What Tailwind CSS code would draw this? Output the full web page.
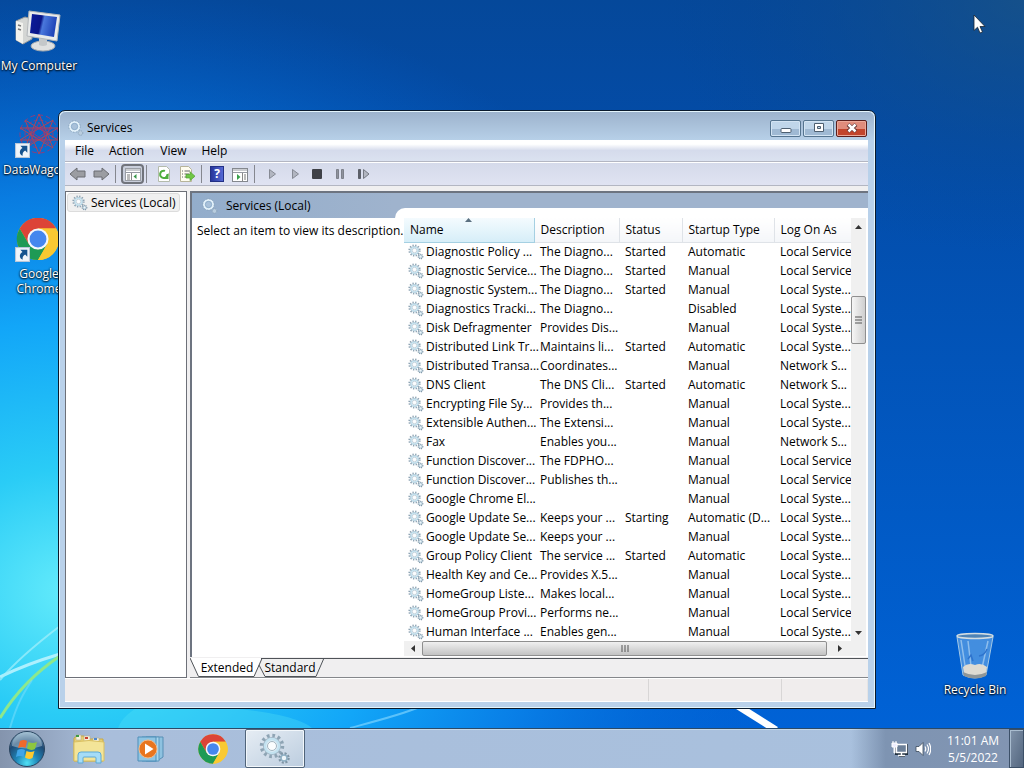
<!DOCTYPE html>
<html lang="en">
<head>
<meta charset="utf-8">
<title>Services</title>
<script src="https://cdn.jsdelivr.net/npm/@tailwindcss/browser@4"></script>
</head>
<body class="h-screen overflow-hidden flex flex-col font-['Open_Sans','Noto_Sans',sans-serif] text-[12px] leading-4 text-black">

<!-- Shared icons -->
<svg class="hidden" aria-hidden="true">
  <defs>
    <symbol id="gears" viewBox="0 0 32 32">
      <circle cx="13" cy="13" r="8" fill="#e4eff6" stroke="#9db3c2" stroke-width="2"/>
      <circle cx="13" cy="13" r="10.500" fill="none" stroke="#8ea4b4" stroke-width="3.500" stroke-dasharray="2.700 2.800"/>
      <circle cx="13" cy="13" r="7" fill="none" stroke="#c3e2f0" stroke-width="2.500"/>
      <circle cx="13" cy="13" r="4.500" fill="#fbfdfe" stroke="#a3b5c0"/>
      <circle cx="25" cy="25" r="4.500" fill="none" stroke="#7f95a5" stroke-width="2.500" stroke-dasharray="2 1.530"/>
      <circle cx="25" cy="25" r="3" fill="#eef6fa" stroke="#8fb0c4" stroke-width="1.500"/>
    </symbol>
    <symbol id="ring" viewBox="0 0 16 16">
      <circle cx="6.500" cy="6.500" r="4.500" fill="#a9c1da" stroke="#e3f1fa" stroke-width="2.200"/>
      <circle cx="6.500" cy="6.500" r="5.800" fill="none" stroke="#8ba6be" stroke-width="1" stroke-dasharray="1.500 1.500"/>
      <circle cx="6.500" cy="6.500" r="3.200" fill="none" stroke="#86a8c6" stroke-width=".8"/>
      <circle cx="12.500" cy="13" r="2.300" fill="#b9cddf" stroke="#8ba3b8" stroke-dasharray="1.200 .8"/>
    </symbol>
    <symbol id="chrome" viewBox="0 0 48 48">
      <circle cx="24" cy="24" r="22" fill="#f9c932"/>
      <path d="M24 13H43.100A22 22 0 0 0 4.900 13L14.500 29.500Z" fill="#dc4437"/>
      <path d="M4.900 13A22 22 0 0 0 24 46L33.500 29.500 24 35 14.500 29.500Z" fill="#1e9a55"/>
      <path d="M24 46A22 22 0 0 0 43.100 13H24L33.500 29.500Z" fill="#f9c932"/>
      <circle cx="24" cy="24" r="11" fill="#f4f8fc"/>
      <circle cx="24" cy="24" r="8.800" fill="#4587ee"/>
    </symbol>
    <symbol id="shortcut" viewBox="0 0 14 14">
      <rect x=".5" y=".5" width="13" height="13" fill="#f0f5fa" stroke="#b8c7d8"/>
      <path d="M5 2.500h6.500V9L9.500 7C7.500 8.300 6.800 9.500 7.200 12 3.500 10.500 3.800 6.500 7 4.600Z" fill="#15538f"/>
    </symbol>
  </defs>
</svg>

<main class="relative flex-1 min-h-0 overflow-hidden bg-[#0058c4]">
  <!-- Wallpaper -->
  <svg class="absolute inset-0 w-full h-full" viewBox="0 0 1024 728" preserveAspectRatio="none" aria-hidden="true">
    <defs>
      <linearGradient id="sky" x1="0" y1="0" x2="0" y2="1">
        <stop offset="0" stop-color="#05489a"/><stop offset=".2" stop-color="#034ca8"/><stop offset="1" stop-color="#0062d6"/>
      </linearGradient>
      <radialGradient id="glow" gradientUnits="userSpaceOnUse" cx="70" cy="590" r="720" gradientTransform="translate(0 90) scale(1 .85)">
        <stop offset="0" stop-color="#64ebfb"/><stop offset=".2" stop-color="#2accf6"/><stop offset=".44" stop-color="#12a6f8"/><stop offset=".65" stop-color="#0a84ea" stop-opacity=".85"/><stop offset="1" stop-color="#0060d0" stop-opacity="0"/>
      </radialGradient>
      <radialGradient id="shade" cx="1" cy="0" r=".35">
        <stop offset="0" stop-color="#1c5484" stop-opacity=".7"/><stop offset="1" stop-color="#084690" stop-opacity="0"/>
      </radialGradient>
    </defs>
    <rect width="1024" height="728" fill="url(#sky)"/>
    <rect width="1024" height="728" fill="url(#glow)"/>
    <rect width="1024" height="728" fill="url(#shade)"/>
    <path d="M0 677C18 668 40 660 60 654" fill="none" stroke="#c8f6ff" stroke-width="3" opacity=".8"/>
    <path d="M0 680C15 662 35 645 60 626" fill="none" stroke="#a5f0fb" stroke-width="2" opacity=".7"/>
    <path d="M0 718C16 692 36 672 60 656" fill="none" stroke="#8de88c" stroke-width="3"/>
    <path d="M10 728C18 700 26 690 32 680" fill="none" stroke="#7de0fb" stroke-width="2" opacity=".5"/>
    <path d="M118 728C122 718 128 714 136 708H230C270 712 300 718 312 728Z" fill="#5be6f5" opacity=".3"/>
    <path d="M350 728C380 720 400 715 420 707" fill="none" stroke="#8edcff" stroke-width="2" opacity=".6"/>
    <path d="M738 706 776 730" stroke="#ffffff" stroke-width="7"/>
  </svg>

  <!-- Desktop shortcuts -->
  <a href="#computer" class="absolute left-0 top-[10px] w-[78px] flex flex-col items-center text-white [text-shadow:0_1px_2px_#000,0_0_2px_#000]">
    <svg class="w-12 h-12" viewBox="0 0 48 48" aria-hidden="true">
      <defs><linearGradient id="scr" x1="0" y1="0" x2="1" y2=".2"><stop offset="0" stop-color="#0a1c9c"/><stop offset=".45" stop-color="#0a1688"/><stop offset=".55" stop-color="#4a78dc"/><stop offset="1" stop-color="#1f44b8"/></linearGradient></defs>
      <path d="M1 11 10 7 17 9V29L8 34 1 30Z" fill="#d4d6d4" stroke="#94989a"/>
      <path d="M1 11 8 13V34L1 30Z" fill="#f2f2ee"/><path d="M3 15l3 1M3 19l3 1" stroke="#777" stroke-width="1.500"/>
      <ellipse cx="28" cy="36" rx="12" ry="5" fill="#dfe1e1" stroke="#a9acae"/>
      <path d="M24 27h8v8q-4 2-8 0Z" fill="#c4c8ca"/>
      <path d="M14 1 45 5 42 31 12 26Z" fill="#e9ebeb" stroke="#b3b7ba"/>
      <path d="M17 4 42 7 39 27 15 23Z" fill="url(#scr)"/>
    </svg>
    <span class="whitespace-nowrap">My Computer</span>
  </a>
  <a href="#datawagon" class="absolute left-0 top-[114px] w-[78px] flex flex-col items-center text-white [text-shadow:0_1px_2px_#000,0_0_2px_#000]">
    <svg class="w-12 h-12" viewBox="0 0 48 48" aria-hidden="true">
      <g fill="none" stroke="#8f3d7c" stroke-width="1">
        <circle cx="24" cy="20" r="19" stroke-dasharray="5 3"/><circle cx="24" cy="20" r="14" stroke-dasharray="4 2"/><circle cx="24" cy="20" r="6"/>
        <path d="M24 0 38 34 5 14H43L10 34Z M24 40 10 6 43 26H5L38 6Z" stroke="#b24358"/>
        <path d="M24 8 34 30 12 15H36L14 30Z"/>
      </g>
      <use href="#shortcut" x="0" y="29" width="15" height="15"/>
    </svg>
    <span class="self-start ml-[3px] whitespace-nowrap">DataWagon</span>
  </a>
  <a href="#chrome-app" class="absolute left-0 top-[218px] w-[78px] flex flex-col items-center text-center text-white leading-[15px] [text-shadow:0_1px_2px_#000,0_0_2px_#000]">
    <svg class="w-12 h-12" viewBox="0 0 48 48" aria-hidden="true">
      <use href="#chrome" x="0" y="-2" width="46" height="46"/>
      <use href="#shortcut" x="0" y="29" width="15" height="15"/>
    </svg>
    <span>Google<br>Chrome</span>
  </a>
  <a href="#recycle" class="absolute right-[10px] bottom-[30px] w-[78px] flex flex-col items-center text-white [text-shadow:0_1px_2px_#000,0_0_2px_#000]">
    <svg class="w-12 h-[50px]" viewBox="0 0 48 50" aria-hidden="true">
      <path d="M6 5 12 43Q24 49 35 43L42 5Z" fill="#6faeea" fill-opacity=".6" stroke="#a4c9e6"/>
      <path d="M10 8 15 40M17 9 20 34M37 9 31 36" stroke="#d9eefa" stroke-width="1.500" opacity=".5"/>
      <path d="M12 35Q17 30 24 33Q30 30 36 35L35 42Q24 48 13 42Z" fill="#dedbd2"/>
      <path d="M12 40Q24 46 36 40L35 44Q24 49 13 44Z" fill="#8f9698"/>
      <path d="M17 27 20 23 22 29M36 17Q34 23 28 24" fill="none" stroke="#2f74cd" stroke-width="1.500"/>
      <ellipse cx="24" cy="4" rx="18" ry="2.500" fill="#4e83b6" stroke="#d3dde2" stroke-width="1.500"/>
    </svg>
    <span class="whitespace-nowrap">Recycle Bin</span>
  </a>

  <!-- Services window -->
  <section class="absolute left-[58px] right-[148px] top-[110px] rounded-t-[7px] border border-[#0a1a2c] bg-[#b9d1ea] shadow-[inset_0_0_0_1px_#e4f5fc] pl-[6px] pr-[7px] pb-[6px]">
    <header class="-ml-[5px] -mr-[6px] mt-px px-[7px] h-7 flex items-center rounded-t-[6px] bg-gradient-to-b from-[#9db3cd] to-[#b7d0e8]">
      <svg class="w-4 h-4 ml-px mt-1" aria-hidden="true"><use href="#ring"/></svg>
      <h1 class="ml-[3px] pt-1 flex-1">Services</h1>
      <div class="flex gap-[2px] pt-1">
        <button aria-label="Minimize" class="w-[31px] h-[17px] flex items-center justify-center rounded-[2px] border border-[#55748f] shadow-[inset_0_0_0_1px_#d3e4f3] bg-gradient-to-b from-[#c0d6ea] from-50% to-[#9fb9d3] to-50%">
          <svg class="w-3 h-3" viewBox="0 0 12 12"><rect x="1" y="6.500" width="10" height="4" rx="1" fill="#fff" stroke="#4d5f70"/></svg>
        </button>
        <button aria-label="Restore" class="w-[31px] h-[17px] flex items-center justify-center rounded-[2px] border border-[#55748f] shadow-[inset_0_0_0_1px_#d3e4f3] bg-gradient-to-b from-[#c0d6ea] from-50% to-[#9fb9d3] to-50%">
          <svg class="w-3 h-3" viewBox="0 0 12 12"><path d="M1.500 1.500h9v8h-9ZM4.500 4.500v2h3v-2Z" fill="#fff" fill-rule="evenodd" stroke="#4d5f70"/></svg>
        </button>
        <button aria-label="Close" class="w-[31px] h-[17px] flex items-center justify-center rounded-[2px] border border-[#5c1f1d] shadow-[inset_0_0_0_1px_#eba999] bg-gradient-to-b from-[#e08c7c] from-50% to-[#c2452c] to-50%">
          <svg class="w-3 h-3" viewBox="0 0 12 12"><path d="m2 2.500 8 7M10 2.500l-8 7" stroke="#5a3030" stroke-width="4"/><path d="m2.500 2.500 7 7M9.500 2.500l-7 7" stroke="#fff" stroke-width="2.500"/></svg>
        </button>
      </div>
    </header>

    <div class="bg-[#f0eff0]">
      <nav class="h-[22px] flex items-center bg-gradient-to-b from-white from-20% via-[#d5dbec] via-50% to-[#dbe2f0] border-b border-[#b3b6c2]">
        <button class="ml-[10px]">File</button>
        <button class="ml-[15px]">Action</button>
        <button class="ml-4">View</button>
        <button class="ml-[15px]">Help</button>
      </nav>

      <div class="h-6 flex items-center pl-1 bg-gradient-to-b from-[#d5daea] to-[#e0e3f2] border-t border-t-white border-b border-b-[#b3b6c2]" role="toolbar" aria-label="Tools">
        <button aria-label="Back"><svg class="w-[18px] h-4 block" viewBox="0 0 18 16"><path d="M1 8 8 2v3h8v6H8v3Z" fill="#9b9da2" stroke="#6b6d72"/></svg></button>
        <button aria-label="Forward" class="ml-[5px]"><svg class="w-[18px] h-4 block" viewBox="0 0 18 16"><path d="M17 8 10 2v3H2v6h8v3Z" fill="#9b9da2" stroke="#6b6d72"/></svg></button>
        <span class="ml-[5px] w-px h-[18px] bg-[#85878f]"></span>
        <button aria-label="Show or hide console tree" class="ml-[5px] w-[23px] h-5 rounded-[4px] border-2 border-[#71747c] bg-[#c9cedb] flex items-center justify-center">
          <svg class="w-4 h-[14px] shrink-0" viewBox="0 0 16 14"><rect x=".5" y="1.500" width="15" height="12" fill="#fff" stroke="#9b9fa6"/><path d="M1 3h14M1 5.500h14" stroke="#969aa3" stroke-width="1"/><path d="M6.500 6v7" stroke="#888"/><path d="M2 8h3M2 10h3M2 12h3" stroke="#777"/><path d="m11.500 7-3 2.500 3 2.500Z" fill="#38964a"/></svg>
        </button>
        <span class="ml-[2px] w-px h-[18px] bg-[#85878f]"></span>
        <button aria-label="Refresh" class="ml-[9px]"><svg class="w-4 h-4 block" viewBox="0 0 16 16"><path d="M2.500.5h8l3 3v12h-11Z" fill="#fff" stroke="#b4bbac"/><path d="M11.500 8A3.700 3.700 0 1 1 9 4.900" fill="none" stroke="#4fae3e" stroke-width="2"/><path d="M12.500 7v6H7.500Z" fill="#4fae3e"/></svg></button>
        <button aria-label="Export list" class="ml-[7px]"><svg class="w-4 h-4 block" viewBox="0 0 16 16"><path d="M1.500.5h8l3 3v12h-11Z" fill="#fffdf0" stroke="#b7b49a"/><path d="M3 5h1M5.500 5H11M3 8h1M5.500 8H10M3 11h1M5.500 11H9" stroke="#666"/><path d="M7 8.500h4V5.800l5 4.400-5 4.400V12H7Z" fill="#6fc645" stroke="#4fa12f" stroke-width=".7"/></svg></button>
        <span class="ml-[6px] w-px h-[18px] bg-[#85878f]"></span>
        <button aria-label="Help" class="ml-2 w-[14px] h-4 bg-gradient-to-r from-[#28369c] to-[#5468d4] border border-[#223086] text-white font-bold leading-[14px]">?</button>
        <button aria-label="Show action pane" class="ml-2"><svg class="w-4 h-4 block" viewBox="0 0 16 16"><rect x=".5" y="2.500" width="15" height="13" fill="#fff" stroke="#84888e"/><path d="M1 4h14M1 6.500h14" stroke="#969aa3"/><path d="M10.500 7v8" stroke="#888"/><path d="M12 9h2M12 11h2M12 13h2" stroke="#777"/><path d="m5 8 3.500 3L5 14Z" fill="#38a04a"/></svg></button>
        <span class="ml-[6px] w-px h-[18px] bg-[#85878f]"></span>
        <button aria-label="Start service" class="ml-[13px]"><svg class="w-[9px] h-3 block" viewBox="0 0 9 12"><path d="M1.500 1.500 7.500 6l-6 4.500Z" fill="#b2b6c1" stroke="#868a94"/></svg></button>
        <button aria-label="Resume service" class="ml-[14px]"><svg class="w-[9px] h-3 block" viewBox="0 0 9 12"><path d="M1.500 1.500 7.500 6l-6 4.500Z" fill="#b2b6c1" stroke="#868a94"/></svg></button>
        <button aria-label="Stop service" class="ml-3 w-[10px] h-[10px] rounded-[1px] bg-[#3f4147]"></button>
        <button aria-label="Pause service" class="ml-[14px]"><svg class="w-2 h-3 block" viewBox="0 0 8 12"><path d="M.5 1.500h2v9h-2ZM5.500 1.500h2v9h-2Z" fill="#8e929c" stroke="#7d818b"/></svg></button>
        <button aria-label="Restart service" class="ml-[14px]"><svg class="w-3 h-3 block" viewBox="0 0 12 12"><path d="M.5 1.500h2v9h-2Z" fill="#5c6069" stroke="#5c6069"/><path d="M5.500 1.500 11 6l-5.500 4.500Z" fill="#b2b6c1" stroke="#747882"/></svg></button>
      </div>

      <div class="flex gap-[3px] pt-[5px]">
        <!-- Console tree -->
        <aside class="w-[122px] shrink-0 bg-white border border-[#6d7078]">
          <a href="#local" class="m-px mr-[6px] h-[19px] flex items-center gap-[3px] pl-1 rounded-[3px] bg-[#f0f0f0] border border-[#dcdcdc] whitespace-nowrap">
            <svg class="w-4 h-4" aria-hidden="true"><use href="#gears"/></svg>Services (Local)
          </a>
        </aside>

        <div class="flex-1 min-w-0 flex flex-col">
          <!-- Result pane -->
          <div class="flex border-l-2 border-t-2 border-[#6d7480] bg-[#9fb3cd]">
            <div class="w-[203px] shrink-0 flex flex-col bg-white">
              <h2 class="h-[25px] flex items-center bg-gradient-to-r from-[#93adcb] to-[#9fb3cd] pl-[10px] gap-2">
                <svg class="w-4 h-4" aria-hidden="true"><use href="#ring"/></svg>Services (Local)
              </h2>
              <p class="relative pl-[5px] pt-[5px] whitespace-nowrap">Select an item to view its description.</p>
            </div>
            <div class="flex-1 min-w-0 mt-[15px] pt-[10px] pl-[9px] pr-[2px] pb-px bg-white rounded-tl-[10px]">
              <div class="flex">
                <table class="flex-1 min-w-0 table-fixed w-full border-collapse">
                  <colgroup><col class="w-[130px]"><col class="w-[85px]"><col class="w-[63px]"><col class="w-[92px]"><col></colgroup>
                  <thead>
                    <tr class="h-6 text-left">
                      <th scope="col" class="relative p-0 pl-[6px] font-normal bg-gradient-to-b from-[#f4fbfe] to-[#d6eef8] border-r border-b border-[#a5d0e2]">Name
                        <svg class="absolute left-[61px] top-0 w-[7px] h-1" viewBox="0 0 7 4" aria-hidden="true"><path d="M0 4 3.500 0 7 4Z" fill="#5b7080"/></svg>
                      </th>
                      <th scope="col" class="p-0 pl-[6px] font-normal bg-gradient-to-b from-white to-[#f4f6f9] border-r border-b border-[#dfe3e8]">Description</th>
                      <th scope="col" class="p-0 pl-[6px] font-normal bg-gradient-to-b from-white to-[#f4f6f9] border-r border-b border-[#dfe3e8]">Status</th>
                      <th scope="col" class="p-0 pl-[6px] font-normal bg-gradient-to-b from-white to-[#f4f6f9] border-r border-b border-[#dfe3e8]">Startup Type</th>
                      <th scope="col" class="p-0 pl-[6px] font-normal bg-gradient-to-b from-white to-[#f4f6f9] border-b border-[#dfe3e8]">Log On As</th>
                    </tr>
                  </thead>
                  <tbody id="services"></tbody>
                </table>
                <div class="w-[15px] shrink-0 flex flex-col items-center bg-[#f0f0f0]">
                  <button aria-label="Scroll up" class="w-full h-[17px] flex items-center justify-center"><svg class="w-[7px] h-1" viewBox="0 0 7 4"><path d="M0 4 3.500 0 7 4Z" fill="#333"/></svg></button>
                  <button aria-label="Vertical scroll position" class="mt-[61px] w-[15px] h-12 rounded-[2px] border border-[#8f8f8f] bg-gradient-to-r from-[#f6f6f6] to-[#cfcfcf] flex items-center justify-center"><svg class="w-[7px] h-2" viewBox="0 0 7 8"><path d="M0 1h7M0 4h7M0 7h7" stroke="#555"/></svg></button>
                  <button aria-label="Scroll down" class="mt-auto w-full h-[17px] flex items-center justify-center"><svg class="w-[7px] h-1" viewBox="0 0 7 4"><path d="M0 0 3.500 4 7 0Z" fill="#333"/></svg></button>
                </div>
              </div>
              <div class="h-[15px] flex items-center bg-[#f0f0f0]">
                <button aria-label="Scroll left" class="w-[18px] flex justify-center"><svg class="w-1 h-[7px]" viewBox="0 0 4 7"><path d="M4 0 0 3.500 4 7Z" fill="#333"/></svg></button>
                <button aria-label="Horizontal scroll position" class="flex-1 h-[15px] rounded-[2px] border border-[#8f8f8f] bg-gradient-to-b from-[#f0f0f0] to-[#c3c3c3] flex items-center justify-center"><svg class="w-2 h-[7px]" viewBox="0 0 8 7"><path d="M1 0v7M4 0v7M7 0v7" stroke="#555"/></svg></button>
                <button aria-label="Scroll right" class="w-[26px] flex justify-center"><svg class="w-1 h-[7px]" viewBox="0 0 4 7"><path d="M0 0 4 3.500 0 7Z" fill="#333"/></svg></button>
                <span class="w-[13px]"></span>
              </div>
            </div>
          </div>
          <!-- View tabs -->
          <div class="relative h-5 mt-px border-b border-[#85878b]">
            <svg class="absolute inset-0 w-full h-full" aria-hidden="true">
              <path d="M71 .5H2000" stroke="#4f5358"/>
              <path d="M0 0 8.500 18.500H64L71 0Z" fill="#fff"/>
              <path d="M71.500 1H133L126 18H76L70 6Z" fill="#f0f0f0"/>
              <path d="M0 0 8.500 18.500H64L72 .5M69 7l6 11.500H126L134 0" fill="none" stroke="#4f5358"/>
            </svg>
            <div class="relative h-full flex items-center">
              <button class="ml-3 w-[50px] flex justify-center">Extended</button>
              <button class="ml-[13px] w-[50px] flex justify-center">Standard</button>
            </div>
          </div>
        </div>
      </div>

      <footer class="h-6 flex border-t border-t-white border-b border-b-white bg-[#f0eded]">
        <span class="flex-1 border-r border-[#d8d6d6]"></span>
        <span class="w-[133px] border-r border-[#d8d6d6]"></span>
        <span class="w-[86px] border-r border-[#e6e4e4]"></span>
      </footer>
    </div>
  </section>

  <svg class="absolute right-[38px] top-[14px] w-[13px] h-5" viewBox="0 0 13 20" aria-hidden="true"><path d="M1 1v15.500l3.500-3.300L7 19l2.500-1-2.500-5.500H12Z" fill="#fff" stroke="#1a2530" stroke-width=".8"/></svg>
</main>

<!-- Taskbar -->
<footer class="h-10 shrink-0 flex items-center border-t border-[#2b4a68] shadow-[inset_0_1px_0_#c5d9ea] bg-gradient-to-r from-[#8494ad] via-[#a9bedb] via-10% to-[#a9c1de]">
  <button aria-label="Start" class="ml-2">
    <svg class="w-[38px] h-[38px] block" viewBox="0 0 38 38">
      <defs><radialGradient id="orb" cx=".5" cy=".9" r=".9"><stop offset="0" stop-color="#4fe0f4"/><stop offset=".35" stop-color="#1f86b8"/><stop offset=".7" stop-color="#1f4a74"/><stop offset="1" stop-color="#8fb4cc"/></radialGradient></defs>
      <circle cx="19" cy="19" r="17.500" fill="url(#orb)" stroke="#28435e"/>
      <path d="M4 16A15 14 0 0 1 34 16Q19 21 4 16Z" fill="#c6d9e4" opacity=".45"/>
      <path d="M12 11q4-2 7 0l-1.500 7q-3-2-7.500 0Z" fill="#ef6a2b"/>
      <path d="M20.500 12q4 2 8.500 0l-2 7q-4 2-8-.5Z" fill="#8dc63f"/>
      <path d="M9.500 20q4-2 7.500 0l-1.500 7Q12 25 8 27Z" fill="#3fa5e8"/>
      <path d="M18.500 21q4 2 8 0l-2 7q-4 2-7.500-.5Z" fill="#fdc92f"/>
    </svg>
  </button>
  <button aria-label="File Explorer" class="ml-[26px]">
    <svg class="w-[34px] h-8 block" viewBox="0 0 34 32">
      <path d="M2 5 5 3h7l2 3h17v22H2Z" fill="#e6cf72" stroke="#c8a945"/>
      <path d="M4 2h5v5H4ZM12 3h6v5h-6ZM21 5h6v4h-6Z" fill="#f6f0dc" stroke="#b9b08a" stroke-width=".6"/>
      <path d="M4 2h3v2H4Z" fill="#3b9b45"/><path d="M13 4h3v2h-3Z" fill="#c8412f"/><path d="M22 5h3v2h-3Z" fill="#4a86d0"/>
      <path d="M2 9q15-3 30 0v19H2Z" fill="#f3e498" stroke="#d9bf60"/>
      <path d="M6 30V22q0-3 3-3h17q3 0 3 3v8h-5v-5q0-1-1-1H12q-1 0-1 1v5Z" fill="#a5dcf7" stroke="#5da9d6"/>
    </svg>
  </button>
  <button aria-label="Media Player" class="ml-[30px]">
    <svg class="w-[30px] h-[28px] block" viewBox="0 0 30 28">
      <path d="M10 2h17v20l-6 4H10Z" fill="#8ec2e0" stroke="#568fb5"/><path d="M6 2h17v24H6Z" fill="#a9d6ec" stroke="#5a98bf"/><path d="M2 2h18v24H2Z" fill="#8fc5e3" stroke="#4e8fb9"/>
      <circle cx="12" cy="14" r="9" fill="#e8751e" stroke="#f3b987"/><path d="m9 8.500 8.500 5.500L9 19.500Z" fill="#fff"/>
    </svg>
  </button>
  <button aria-label="Google Chrome" class="ml-[31px]"><svg class="w-8 h-8 block"><use href="#chrome"/></svg></button>
  <button aria-label="Services" class="ml-4 w-[60px] h-[39px] rounded-[2px] border border-[#50647a] shadow-[inset_0_0_0_1px_#f2f7fb] bg-gradient-to-br from-[#e6edf4] to-[#bccddf] flex items-center justify-center"><svg class="w-8 h-8"><use href="#gears"/></svg></button>
  <div class="ml-auto self-stretch flex items-center bg-gradient-to-r from-transparent via-[#7e94b2] via-20% to-[#8295b2] pl-[40px] text-white">
    <button aria-label="Network"><svg class="w-[18px] h-4 block" viewBox="0 0 18 16"><path d="M5.500 4.500h10v8h-10ZM8 15h6" fill="#6b7f98" stroke="#22303f" stroke-width="3"/><path d="M5.500 3.500h10v8h-10ZM7 14.500h7M10.500 12v2" fill="#6b7f98" stroke="#fff" stroke-width="1.400"/><path d="M1 2h5v4H4v6H3V6H1ZM2 0v2M5 0v2" fill="#eef" stroke="#fff" stroke-width="1"/></svg></button>
    <button aria-label="Volume" class="ml-[6px]"><svg class="w-4 h-4 block" viewBox="0 0 16 16"><path d="M1 5.500h3l4-4v13l-4-4H1Z" fill="#fff" stroke="#3a4a5c" stroke-width=".8"/><path d="M10 5.500q1.500 2.500 0 5M12 3.500q3 4.500 0 9M14 2q3.500 6 0 12" fill="none" stroke="#fff" stroke-width="1.200"/></svg></button>
    <time datetime="2022-05-05T11:01" class="ml-[10px] w-[64px] text-center leading-[17px]">11:01 AM<br>5/5/2022</time>
    <button aria-label="Show desktop" class="ml-1 self-stretch w-[15px] border border-[#3c5068] shadow-[inset_1px_1px_0_#a9bccf] bg-gradient-to-br from-[#8193aa] to-[#53667f]"></button>
  </div>
</footer>

<script>
const services = [
  ["Diagnostic Policy ...", "The Diagno...", "Started", "Automatic", "Local Service"],
  ["Diagnostic Service...", "The Diagno...", "Started", "Manual", "Local Service"],
  ["Diagnostic System...", "The Diagno...", "Started", "Manual", "Local Syste..."],
  ["Diagnostics Tracki...", "The Diagno...", "", "Disabled", "Local Syste..."],
  ["Disk Defragmenter", "Provides Dis...", "", "Manual", "Local Syste..."],
  ["Distributed Link Tr...", "Maintains li...", "Started", "Automatic", "Local Syste..."],
  ["Distributed Transa...", "Coordinates...", "", "Manual", "Network S..."],
  ["DNS Client", "The DNS Cli...", "Started", "Automatic", "Network S..."],
  ["Encrypting File Sy...", "Provides th...", "", "Manual", "Local Syste..."],
  ["Extensible Authen...", "The Extensi...", "", "Manual", "Local Syste..."],
  ["Fax", "Enables you...", "", "Manual", "Network S..."],
  ["Function Discover...", "The FDPHO...", "", "Manual", "Local Service"],
  ["Function Discover...", "Publishes th...", "", "Manual", "Local Service"],
  ["Google Chrome El...", "", "", "Manual", "Local Syste..."],
  ["Google Update Se...", "Keeps your ...", "Starting", "Automatic (D...", "Local Syste..."],
  ["Google Update Se...", "Keeps your ...", "", "Manual", "Local Syste..."],
  ["Group Policy Client", "The service ...", "Started", "Automatic", "Local Syste..."],
  ["Health Key and Ce...", "Provides X.5...", "", "Manual", "Local Syste..."],
  ["HomeGroup Liste...", "Makes local...", "", "Manual", "Local Syste..."],
  ["HomeGroup Provi...", "Performs ne...", "", "Manual", "Local Service"],
  ["Human Interface ...", "Enables gen...", "", "Manual", "Local Syste..."]
];
document.getElementById("services").innerHTML = services.map(([name, ...rest]) => `
  <tr class="h-[19px] whitespace-nowrap">
    <td class="p-0 pl-1"><div class="flex items-center gap-[2px]"><svg class="w-4 h-4 shrink-0" aria-hidden="true"><use href="#gears"/></svg><span>${name}</span></div></td>
    ${rest.map(text => `<td class="p-0 pl-[6px]">${text}</td>`).join("")}
  </tr>`).join("");
</script>
</body>
</html>
